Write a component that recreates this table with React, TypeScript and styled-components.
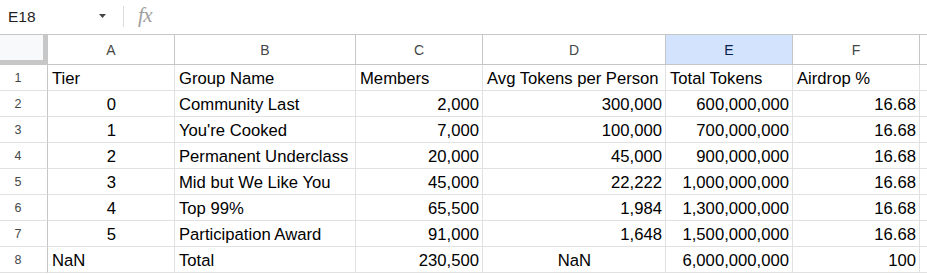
import styled, { createGlobalStyle } from "styled-components";

type Align = "left" | "right" | "center";

const GlobalStyle = createGlobalStyle`
  html, body {
    margin: 0;
    padding: 0;
    background: #ffffff;
    overflow: hidden;
  }
  * {
    box-sizing: border-box;
  }
`;

const COLUMNS = ["A", "B", "C", "D", "E", "F"];
const SELECTED_COLUMN = "E";

// each row: [text, align] per column A..F
const ROWS: [string, Align][][] = [
  [["Tier", "left"], ["Group Name", "left"], ["Members", "left"], ["Avg Tokens per Person", "left"], ["Total Tokens", "left"], ["Airdrop %", "left"]],
  [["0", "center"], ["Community Last", "left"], ["2,000", "right"], ["300,000", "right"], ["600,000,000", "right"], ["16.68", "right"]],
  [["1", "center"], ["You're Cooked", "left"], ["7,000", "right"], ["100,000", "right"], ["700,000,000", "right"], ["16.68", "right"]],
  [["2", "center"], ["Permanent Underclass", "left"], ["20,000", "right"], ["45,000", "right"], ["900,000,000", "right"], ["16.68", "right"]],
  [["3", "center"], ["Mid but We Like You", "left"], ["45,000", "right"], ["22,222", "right"], ["1,000,000,000", "right"], ["16.68", "right"]],
  [["4", "center"], ["Top 99%", "left"], ["65,500", "right"], ["1,984", "right"], ["1,300,000,000", "right"], ["16.68", "right"]],
  [["5", "center"], ["Participation Award", "left"], ["91,000", "right"], ["1,648", "right"], ["1,500,000,000", "right"], ["16.68", "right"]],
  [["NaN", "left"], ["Total", "left"], ["230,500", "right"], ["NaN", "center"], ["6,000,000,000", "right"], ["100", "right"]],
];

const App = () => {
  return (
    <>
      <GlobalStyle />
      <Toolbar>
        <NameBox>E18</NameBox>
        <DropArrow viewBox="0 0 7 4" aria-hidden>
          <path d="M0 0h7L3.5 4z" fill="#444746" />
        </DropArrow>
        <Divider />
        <FxLabel>fx</FxLabel>
      </Toolbar>

      <Sheet>
        {/* column headers */}
        <Corner />
        {COLUMNS.map((col) => (
          <ColHeader key={col} $selected={col === SELECTED_COLUMN}>
            {col}
          </ColHeader>
        ))}
        <ColHeader $selected={false} />

        {/* data rows */}
        {ROWS.map((row, i) => (
          <Row key={i} row={row} index={i + 1} />
        ))}
      </Sheet>
    </>
  );
};

const Row = ({ row, index }: { row: [string, Align][]; index: number }) => (
  <>
    <RowHeader>{index}</RowHeader>
    {row.map(([text, align], j) => (
      <Cell key={j} $align={align}>
        {text}
      </Cell>
    ))}
    <Cell $align="left" />
  </>
);

export default App;

const Toolbar = styled.div`
  height: 35px;
  display: flex;
  align-items: center;
  border-bottom: 1px solid #c4c7c5;
  padding-left: 8px;
  font-family: "Liberation Sans", Arial, sans-serif;
`;

const NameBox = styled.div`
  width: 91px;
  font-size: 15.5px;
  color: #1f1f1f;
  padding-bottom: 1px;
`;

const DropArrow = styled.svg`
  width: 7px;
  height: 4px;
  margin-right: 17px;
  margin-top: -3px;
`;

const Divider = styled.div`
  width: 1px;
  height: 21px;
  background: #dadce0;
  margin-top: -2px;
  margin-right: 14px;
`;

const FxLabel = styled.div`
  font-family: "Liberation Serif", "Times New Roman", serif;
  font-style: italic;
  font-size: 21px;
  color: #a0a0a0;
  margin-top: -4px;
  letter-spacing: -0.5px;
`;

const Sheet = styled.div`
  display: grid;
  grid-template-columns: 48px 127px 181px 127px 183px 127px 127px 1fr;
  grid-template-rows: 30px repeat(8, 26px);
  font-family: "Liberation Sans", Arial, sans-serif;
`;

const Corner = styled.div`
  background: #f8f9fa;
  border-right: 5px solid #c7c7c7;
  border-bottom: 5px solid #c7c7c7;
`;

const ColHeader = styled.div<{ $selected: boolean }>`
  display: flex;
  align-items: center;
  justify-content: center;
  font-size: 14px;
  color: ${(p) => (p.$selected ? "#041e49" : "#444746")};
  background: ${(p) => (p.$selected ? "#d3e3fd" : "#ffffff")};
  border-right: 1px solid #c4c7c5;
  border-bottom: 1px solid #c4c7c5;
`;

const RowHeader = styled.div`
  display: flex;
  align-items: center;
  justify-content: center;
  padding-right: 11px;
  font-size: 12.5px;
  color: #444746;
  border-right: 1px solid #c4c7c5;
  border-bottom: 1px solid #e1e1e1;
`;

const Cell = styled.div<{ $align: Align }>`
  display: flex;
  align-items: flex-end;
  justify-content: ${(p) =>
    p.$align === "right" ? "flex-end" : p.$align === "center" ? "center" : "flex-start"};
  padding: 0 3px 2px 4px;
  font-size: 16.67px;
  line-height: 19px;
  color: #000000;
  white-space: nowrap;
  border-right: 1px solid #e1e1e1;
  border-bottom: 1px solid #e1e1e1;
`;
